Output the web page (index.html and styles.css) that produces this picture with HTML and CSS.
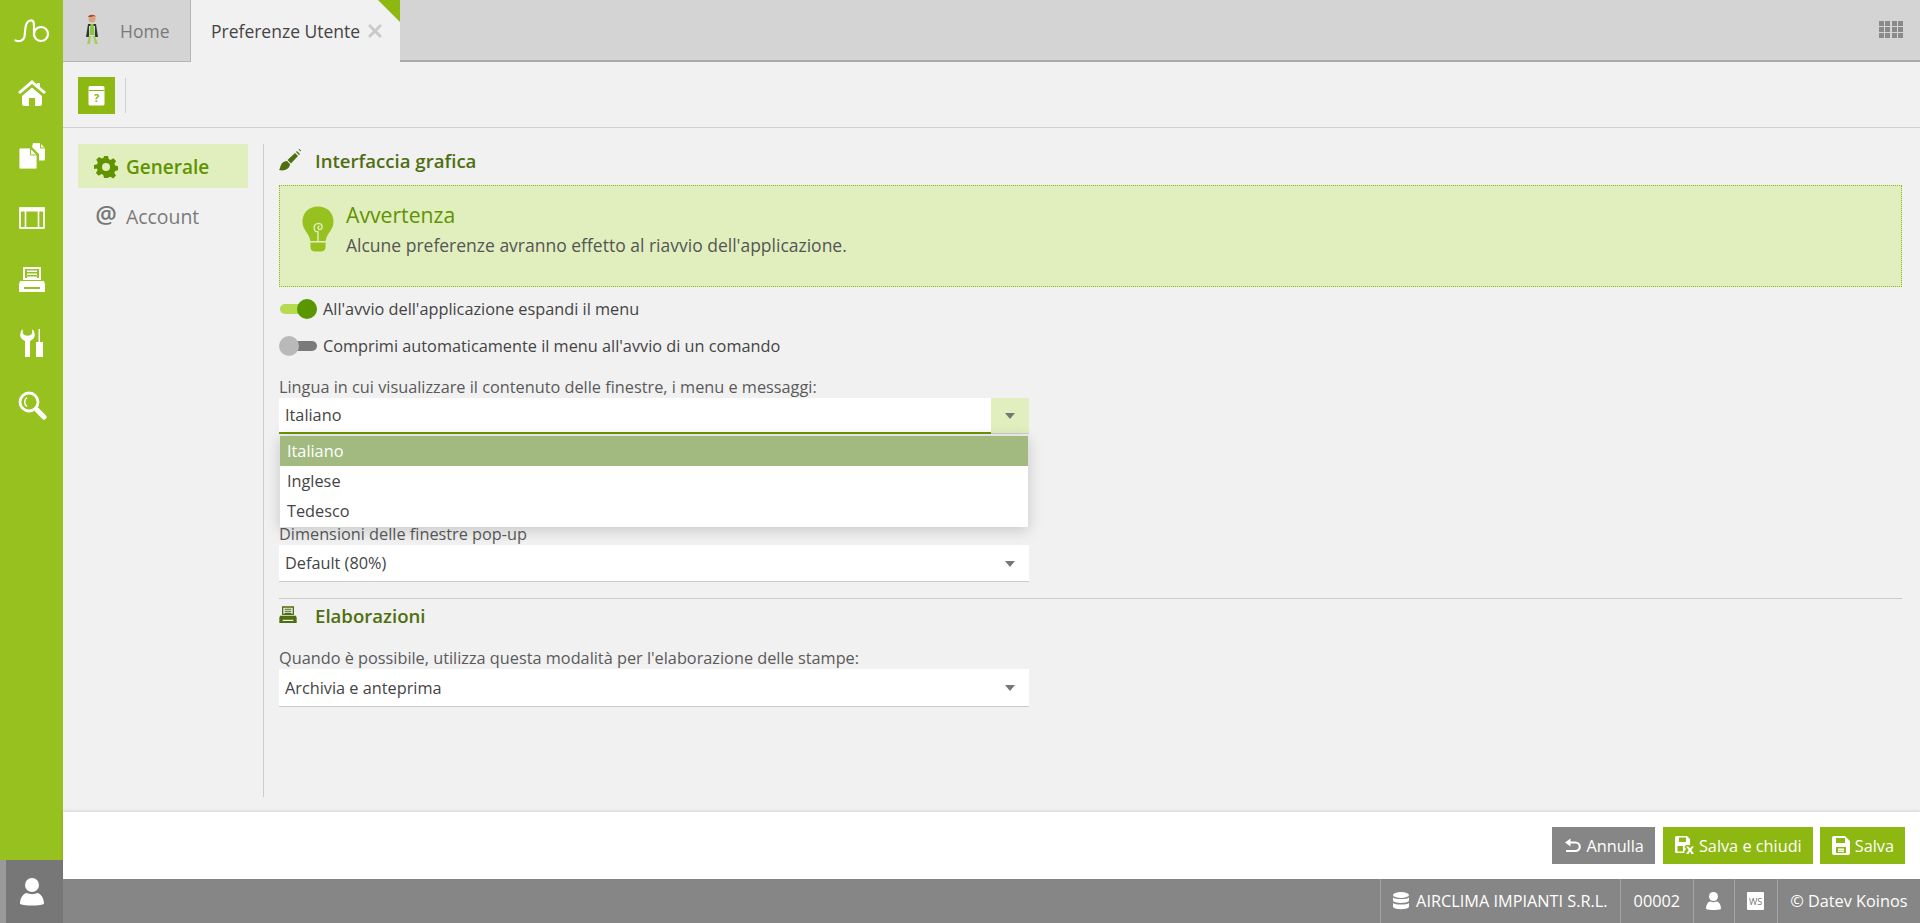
FILE: index.html
```html
<!DOCTYPE html>
<html lang="it">
<head>
<meta charset="utf-8">
<title>Preferenze Utente</title>
<link rel="stylesheet" href="styles.css">
</head>
<body>
<div class="app">
  <aside class="rail">
    <div class="rail-logo">
      <svg width="36" height="28" viewBox="0 0 36 28" fill="none" stroke="#fff" stroke-width="2.200" stroke-linecap="round"><path d="M1.500 23.500c4 1.500 8 .5 9-4 1-6 0-15 6-16 3-.5 3.500 2 3.500 6v9"/><circle cx="27" cy="17" r="7"/></svg>
    </div>
    <a class="rail-item"><svg width="30" height="30" viewBox="0 0 30 30" fill="#fff"><path d="M15 2 1 14l2 2L15 6l12 10 2-2-6-5V5h-3v1.500z"/><path d="M5 18 15 9.500 25 18v8a2 2 0 0 1-2 2h-5v-8h-6v8H7a2 2 0 0 1-2-2z"/></svg></a>
    <a class="rail-item"><svg width="28" height="28" viewBox="0 0 28 28" fill="#fff"><path d="M15 1h7l5 5v11.500a1 1 0 0 1-1 1h-5V12l-7-7z"/><path d="M22.500 1v5H27" fill="none" stroke="#96c11f" stroke-width="1"/><path d="M2.500 6H12l7 7v12.500a1.500 1.500 0 0 1-1.500 1.500h-15A1.500 1.500 0 0 1 1 25.500v-18A1.500 1.500 0 0 1 2.500 6z" stroke="#96c11f" stroke-width=".8"/><path d="M12.500 6.500V13H19" fill="none" stroke="#96c11f" stroke-width="1"/></svg></a>
    <a class="rail-item"><svg width="28" height="24" viewBox="0 0 28 24" fill="none" stroke="#fff" stroke-width="2"><rect x="2" y="2" width="24" height="20" stroke-width="1.800"/><path d="M2 4h24" stroke-width="3"/><path d="M7.500 5v17M20.500 5v17" stroke-width="1.600"/></svg></a>
    <a class="rail-item"><svg width="30" height="30" viewBox="0 0 30 30" fill="#fff"><path d="M6 2h18v13H6zm2 2v9h14V4zm2 1.500h10V7H10zm0 3h10V10H10zm0 3h10V13H10z" fill-rule="evenodd"/><path d="M3 16h24l1 3v8H2v-8zm4 6v2h16v-2z" fill-rule="evenodd"/></svg></a>
    <a class="rail-item"><svg width="28" height="32" viewBox="0 0 28 32" fill="#fff"><path d="M4.500 2C.5 7 2 12 7 14v16h5V14c5-2 6.500-7 2.500-12l-.5 4.500c-2 3-7 3-9 0z"/><path d="M20.500 2H22v13h-1.500z"/><path d="M18 15h7v15h-7z"/></svg></a>
    <a class="rail-item"><svg width="30" height="30" viewBox="0 0 30 30" fill="none" stroke="#fff"><circle cx="12" cy="12" r="9" stroke-width="2.800"/><path d="M20 20l7 7" stroke-width="5" stroke-linecap="round"/><path d="M10 7.500a5.500 5.500 0 0 0 0 9" stroke-width="1.500"/></svg></a>
    <div class="rail-user">
      <svg width="24" height="28" viewBox="0 0 24 28" fill="#fff"><circle cx="12" cy="7" r="7"/><path d="M0 26c0-7 4-11 7-11 2 1.500 8 1.500 10 0 3 0 7 4 7 11-6 2-18 2-24 0z"/></svg>
    </div>
  </aside>
  <div class="main">
    <nav class="tabs">
      <div class="tab tab-home">
        <svg class="avatar" width="16" height="32" viewBox="0 0 16 32"><circle cx="8" cy="5" r="3.500" fill="#d9a37e"/><path d="M4 3c1-3 7-3 8 0l-2-1-3 1z" fill="#b5432a"/><path d="M4 10h8l2 13h-3V12H5v11H2z" fill="#2c3a2c"/><path d="M6.500 10h3l1 11h-5z" fill="#8cc63f"/><path d="M5 22h2l-1 8H3zm4 0h2l3 8h-3z" fill="#a5cf5a"/></svg>
        <span>Home</span>
      </div>
      <div class="tab tab-active">
        <span>Preferenze Utente</span>
        <svg class="tab-x" width="16" height="16" viewBox="0 0 16 16" stroke="#c9c9c9" stroke-width="2.800"><path d="M2 2l12 12M14 2 2 14"/></svg>
        <i class="tab-corner"></i>
      </div>
      <div class="tabs-fill">
        <div class="apps">
          <i></i><i></i><i></i><i></i><i></i><i></i><i></i><i></i><i></i><i></i><i></i><i></i>
        </div>
      </div>
    </nav>
    <div class="toolbar">
      <button class="help-btn" type="button" aria-label="Aiuto">
        <svg width="17" height="20" viewBox="0 0 17 20"><path d="M2 0h13a1.500 1.500 0 0 1 1.500 1.500V18a1.500 1.500 0 0 1-1.500 1.500H2A1.500 1.500 0 0 1 .5 18V1.500A1.500 1.500 0 0 1 2 0z" fill="#fff"/><path d="M.5 4.500h16" stroke="#8cb811"/><text x="8.500" y="15.500" text-anchor="middle" class="help-q">?</text></svg>
      </button>
      <span class="tool-sep"></span>
    </div>
    <div class="content">
      <ul class="side-nav">
        <li class="side-item is-on">
          <svg width="24" height="24" viewBox="0 0 24 24" fill="#5f9300"><path fill-rule="evenodd" d="M10 1h4l.7 3.100 1.900.8 2.700-1.700 2.800 2.800-1.700 2.700.8 1.900 3 .7v4l-3.100.7-.8 1.900 1.700 2.700-2.800 2.800-2.700-1.700-1.900.8L14 23h-4l-.7-3.100-1.900-.8-2.700 1.700-2.800-2.800 1.700-2.700-.8-1.900L0 14v-4l3.100-.7.800-1.900-1.700-2.700 2.800-2.800 2.700 1.700 1.900-.8zM12 8a4 4 0 1 0 0 8 4 4 0 0 0 0-8z"/></svg>
          <span>Generale</span>
        </li>
        <li class="side-item">
          <span class="at">@</span>
          <span>Account</span>
        </li>
      </ul>
      <section class="panel">
        <h2 class="sec-title">
          <svg width="22" height="22" viewBox="0 0 22 22" fill="#4f6e10"><path d="M0 21c1-1 1-3 2-5 1-3 4-4 6-4l3 3c0 3-2 5-5 6-2 .5-4 .5-6 0z"/><path d="M8.500 11 16 4l3 3-7 7.500z"/><path d="M17 3l1-1 3 3-1 1zM19.500 0.500l1-.5 1.500 1.500-.5 1z"/></svg>
          <span>Interfaccia grafica</span>
        </h2>
        <div class="notice">
          <svg class="bulb" width="32" height="48" viewBox="0 0 34 48"><path d="M17 0C7 0 .5 7 .5 16c0 9 7 12 8.500 21h16c1.500-9 8.500-12 8.500-21C33.500 7 27 0 17 0z" fill="#96c11f"/><path d="M9 38h16v5c0 3-2 5-5 5h-6c-3 0-5-2-5-5z" fill="#96c11f"/><path d="M9 37.500h16" stroke="#e1efbe" stroke-width="1.500"/><path d="M17 37V27c-5 0-6-8 0-9 5 0 6 6 2 6.500-2 0-3-3-.5-3.500" fill="none" stroke="#e1efbe" stroke-width="1.500"/></svg>
          <div>
            <div class="notice-title">Avvertenza</div>
            <div class="notice-text">Alcune preferenze avranno effetto al riavvio dell'applicazione.</div>
          </div>
        </div>
        <label class="switch-row">
          <span class="switch is-on"><i></i></span>
          <span>All'avvio dell'applicazione espandi il menu</span>
        </label>
        <label class="switch-row switch-row2">
          <span class="switch"><i></i></span>
          <span>Comprimi automaticamente il menu all'avvio di un comando</span>
        </label>
        <div class="field field-lang">
          <div class="field-label">Lingua in cui visualizzare il contenuto delle finestre, i menu e messaggi:</div>
          <div class="select is-open">
            <span class="select-value">Italiano</span>
            <span class="select-arrow"><i class="caret"></i></span>
          </div>
          <ul class="dropdown">
            <li class="is-sel">Italiano</li>
            <li>Inglese</li>
            <li>Tedesco</li>
          </ul>
        </div>
        <div class="field field-popup">
          <div class="field-label">Dimensioni delle finestre pop-up</div>
          <div class="select">
            <span class="select-value">Default (80%)</span>
            <span class="select-arrow"><i class="caret"></i></span>
          </div>
        </div>
        <hr class="rule">
        <h2 class="sec-title sec-title2">
          <svg width="20" height="20" viewBox="0 0 30 30" fill="#4f6e10"><path d="M6 2h18v13H6zm2 2v9h14V4zm2 1.500h10V7H10zm0 3h10V10H10zm0 3h10V13H10z" fill-rule="evenodd"/><path d="M3 16h24l1 3v8H2v-8zm4 6v2h16v-2z" fill-rule="evenodd"/></svg>
          <span>Elaborazioni</span>
        </h2>
        <div class="field field-print">
          <div class="field-label">Quando è possibile, utilizza questa modalità per l'elaborazione delle stampe:</div>
          <div class="select">
            <span class="select-value">Archivia e anteprima</span>
            <span class="select-arrow"><i class="caret"></i></span>
          </div>
        </div>
      </section>
    </div>
    <div class="actions">
      <button class="btn btn-gray" type="button">
        <svg width="17" height="16" viewBox="0 0 17 16" fill="none" stroke="#fff" stroke-width="2.200"><path d="M3 4.500h8.500a4 4 0 0 1 0 8.500H2"/><path d="M6.500 .5 1 4.500 6.500 8.500z" fill="#fff" stroke="none"/></svg>
        <span>Annulla</span>
      </button>
      <button class="btn" type="button">
        <svg width="19" height="19" viewBox="0 0 19 19" fill="#fff"><path fill-rule="evenodd" d="M1.500 0H12l3 3v6h-4l-1.500 2L11 13l-2 3 1 1H1.500A1.500 1.500 0 0 1 0 15.500v-14A1.500 1.500 0 0 1 1.500 0zM4 1.500V6h7V1.500zM2.500 10v5.500H8V10z"/><path d="M11 10.500h2.500l1.500 2 1.500-2H19L16.300 14l2.700 4h-2.500L15 15.500 13.500 18H11l2.700-4z"/></svg>
        <span>Salva e chiudi</span>
      </button>
      <button class="btn" type="button">
        <svg width="18" height="19" viewBox="0 0 18 19" fill="#fff"><path fill-rule="evenodd" d="M2 0h11l5 5v12a2 2 0 0 1-2 2H2a2 2 0 0 1-2-2V2a2 2 0 0 1 2-2zm2 2v5h9V2zm0 9v6h10v-6zm2 1.500h6V14H6zm0 2h6V16H6z"/></svg>
        <span>Salva</span>
      </button>
    </div>
    <footer class="status">
      <div class="status-cell">
        <svg width="16" height="18" viewBox="0 0 16 18" fill="#fff"><ellipse cx="8" cy="3" rx="8" ry="3"/><path d="M0 5.500c2 2 14 2 16 0V9c-2 2.500-14 2.500-16 0zM0 11c2 2 14 2 16 0v4c-2 3-14 3-16 0z"/></svg>
        <span>AIRCLIMA IMPIANTI S.R.L.</span>
      </div>
      <div class="status-cell">00002</div>
      <div class="status-cell">
        <svg width="15" height="18" viewBox="0 0 15 18" fill="#fff"><circle cx="7.500" cy="4.500" r="4.500"/><path d="M0 17c0-5 2.500-7.500 4.500-7.500 1.500 1 4.500 1 6 0 2 0 4.500 2.500 4.500 7.500-3 1.300-12 1.300-15 0z"/></svg>
      </div>
      <div class="status-cell"><span class="ws">WS</span></div>
      <div class="status-cell">© Datev Koinos</div>
    </footer>
  </div>
</div>
</body>
</html>
```
FILE: styles.css
```css
* { box-sizing: border-box; }
html, body { height: 100%; margin: 0; }
body { font-family: "Open Sans", "Noto Sans", sans-serif; font-size: 16.300px; color: #444; background: #f1f1f1; overflow: hidden; }
ul { list-style: none; margin: 0; padding: 0; }
h2 { margin: 0; }
button { font: inherit; border: 0; padding: 0; }

.app { display: flex; height: 923px; }

.rail { width: 63px; flex: none; background: #96c11f; display: flex; flex-direction: column; }
.rail-logo { height: 62px; display: flex; align-items: center; justify-content: center; }
.rail-item { height: 62.400px; display: flex; align-items: center; justify-content: center; }
.rail-user { margin-top: auto; height: 63px; background: #777; border-left: 6px solid #999; display: flex; align-items: center; justify-content: center; padding-right: 6px; }

.main { flex: 1; min-width: 0; display: flex; flex-direction: column; }

.tabs { height: 62px; flex: none; display: flex; background: #d4d4d4; }
.tab { display: flex; align-items: center; height: 62px; font-size: 17.500px; }
.tab-home { width: 128px; color: #7a7a7a; border-right: 1px solid #b5b5b5; border-bottom: 1px solid #b5b5b5; padding-left: 21px; gap: 20px; }
.avatar { flex: none; margin-top: -1px; }
.tab-active { width: 209px; background: #f1f1f1; color: #444; position: relative; padding-left: 20px; gap: 7px; }
.tab-x { flex: none; }
.tab-corner { position: absolute; top: 0; right: 0; width: 0; height: 0; border-top: 22px solid #8cb811; border-left: 22px solid transparent; }
.tabs-fill { flex: 1; border-bottom: 2px solid #aaa; display: flex; justify-content: flex-end; align-items: center; padding-right: 17px; padding-bottom: 1px; }
.apps { display: grid; grid-template-columns: repeat(4, 5px); grid-auto-rows: 5px; gap: 1.400px; }
.apps i { background: #8a8a8a; }

.toolbar { height: 66px; flex: none; display: flex; align-items: flex-start; padding: 15px 0 0 15px; border-bottom: 1px solid #d0d0d0; }
.help-btn { width: 37px; height: 37px; background: #8cb811; display: flex; align-items: center; justify-content: center; }
.help-q { font-size: 11px; font-weight: 700; fill: #8cb811; font-family: "Open Sans", sans-serif; }
.tool-sep { width: 1px; height: 35px; background: #d0d0d0; margin: 1px 0 0 10px; }

.content { flex: 1; min-height: 0; display: flex; padding: 16px 18px 15px 15px; }
.side-nav { width: 170px; flex: none; }
.side-item { height: 44px; display: flex; align-items: center; padding-left: 16px; gap: 8px; font-size: 19.400px; color: #7a7a7a; margin-bottom: 6px; }
.side-item svg { flex: none; }
.side-item.is-on { background: #e1efbe; color: #5f9300; font-weight: 600; font-size: 19px; padding-top: 1px; }
.at { width: 24px; font-size: 24px; line-height: 24px; text-align: center; font-weight: 600; color: #777; margin-top: -4px; }

.panel { margin-left: 15px; flex: 1; border-left: 1px solid #ccc; padding-left: 15px; padding-top: 1px; }
.sec-title { display: flex; align-items: center; gap: 14px; height: 30px; font-size: 18.600px; font-weight: 600; color: #4f6e10; }
.notice { margin-top: 10px; height: 102px; background: #e1efbe; border: 1px dotted #8cb811; padding: 19px 22px; display: flex; gap: 12px; }
.bulb { flex: none; }
.notice-title { font-size: 21.200px; line-height: 26px; color: #5f9300; margin-top: -3px; }
.notice-text { font-size: 17.500px; line-height: 24px; color: #555; margin-top: 5px; }

.switch-row { display: flex; align-items: center; gap: 6px; height: 24px; margin-top: 10px; color: #444; }
.switch-row2 { margin-top: 13px; }
.switch { width: 38px; height: 20px; position: relative; flex: none; }
.switch::before { content: ""; position: absolute; left: 1px; right: 0; top: 5px; height: 10px; border-radius: 5px; background: #7a7a7a; }
.switch i { position: absolute; left: 0; top: 0; width: 20px; height: 20px; border-radius: 50%; background: #b9b9b9; }
.switch.is-on::before { background: #b5dc50; }
.switch.is-on i { left: auto; right: 0; background: #5a9600; }

.field { width: 750px; position: relative; }
.field-label { line-height: 20px; color: #5a5a5a; margin-bottom: 1px; }
.field-lang { margin-top: 19px; }
.field-popup { margin-top: 90px; }
.field-print { margin-top: 16px; }
.select { height: 37px; background: #fff; border-bottom: 1px solid #ccc; display: flex; align-items: center; color: #444; }
.field-print .select { height: 38px; }
.select-value { flex: 1; padding-left: 6px; }
.select-arrow { width: 38px; height: 100%; flex: none; display: flex; align-items: center; justify-content: center; padding-top: 1px; }
.caret { width: 0; height: 0; border-top: 6px solid #777; border-left: 5px solid transparent; border-right: 5px solid transparent; }
.select.is-open { height: 36px; border-bottom: 0; }
.select.is-open .select-value { height: 100%; line-height: 35px; border-bottom: 2px solid #6b9400; }
.select.is-open .select-arrow { background: #e1efbe; border-bottom: 1px solid #ccc; }

.dropdown { position: absolute; z-index: 5; top: 59px; left: 1px; right: 1px; background: #fff; padding-bottom: 1px; box-shadow: 0 3px 14px rgba(0,0,0,.18); color: #444; }
.dropdown li { height: 30px; line-height: 30px; padding-left: 7px; }
.dropdown li.is-sel { background: #a2ba80; color: #fff; }

.rule { border: 0; border-top: 1px solid #ccc; margin: 16px 0 0; }
.sec-title2 { gap: 17px; height: 32px; }
.sec-title2 svg { margin-left: -1px; }
.field-print { margin-top: 17px; }

.actions { height: 67px; flex: none; background: #fff; box-shadow: 0 -1px 3px rgba(0,0,0,.12); position: relative; display: flex; justify-content: flex-end; align-items: center; gap: 7px; padding: 0 15px 0 0; }
.btn { height: 37px; background: #8cb811; color: #fff; display: flex; align-items: center; gap: 5px; padding: 0 11px 0 12px; }
.btn-gray { background: #868686; margin-right: 1px; }

.status { height: 44px; flex: none; background: #868686; color: #fff; display: flex; justify-content: flex-end; }
.status-cell { display: flex; align-items: center; gap: 7px; padding: 0 12.500px; border-left: 1px solid #a3a3a3; }
.ws { width: 17px; height: 18px; background: #fff; color: #777; font-size: 9px; display: flex; align-items: center; justify-content: center; border-radius: 1px; }
```
